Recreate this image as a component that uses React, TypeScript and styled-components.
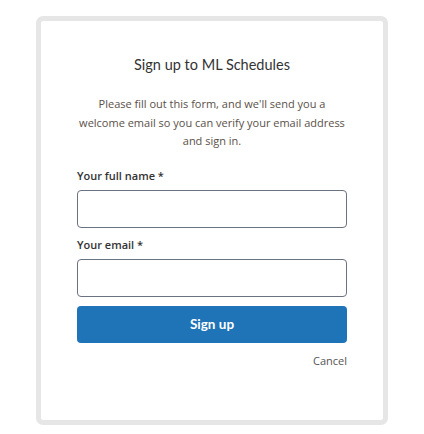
import styled, { createGlobalStyle } from 'styled-components';

const GlobalStyle = createGlobalStyle`
  body {
    margin: 0;
    background: #ffffff;
    font-family: "Open Sans", "Noto Sans", sans-serif;
  }
`;

const Page = styled.div`
  padding: 16px 0 0 36px;
`;

const Card = styled.div`
  box-sizing: border-box;
  width: 352px;
  height: 409px;
  border: 5px solid #e6e6e6;
  border-radius: 7px;
  padding: 34px 36px 0;
  display: flex;
  flex-direction: column;
`;

const Title = styled.h1`
  margin: 0;
  font-family: "Lato", "Noto Sans", sans-serif;
  font-weight: 400;
  font-size: 14.5px;
  line-height: 20px;
  color: #333333;
  text-align: center;
`;

const Intro = styled.p`
  margin: 20px 0 17px;
  font-size: 11px;
  line-height: 18.5px;
  color: #5a5048;
  text-align: center;
`;

const Field = styled.div`
  display: flex;
  flex-direction: column;
  margin-bottom: 9px;
`;

const Label = styled.label`
  font-size: 11px;
  font-weight: 600;
  line-height: 16px;
  color: #333333;
  margin-bottom: 6px;
`;

const Input = styled.input`
  box-sizing: border-box;
  height: 38px;
  width: 100%;
  border: 1px solid #6b7280;
  border-radius: 4px;
  padding: 0 10px;
  font-size: 13px;
  outline: none;
`;

const SubmitButton = styled.button`
  height: 37px;
  width: 100%;
  border: none;
  border-radius: 4px;
  background: #1f73b7;
  color: #ffffff;
  font-family: "Lato", "Noto Sans", sans-serif;
  font-weight: 700;
  font-size: 13.5px;
  cursor: pointer;
`;

const CancelRow = styled.div`
  display: flex;
  justify-content: flex-end;
  margin-top: 10px;
`;

const CancelLink = styled.a`
  font-size: 11px;
  line-height: 16px;
  color: #555555;
  text-decoration: none;
  cursor: pointer;
`;

export default function App() {
  return (
    <Page>
      <GlobalStyle />
      <Card>
        <Title>Sign up to ML Schedules</Title>
        <Intro>
          Please fill out this form, and we'll send you a welcome email so you
          can verify your email address and sign in.
        </Intro>
        <Field>
          <Label htmlFor="fullname">Your full name *</Label>
          <Input id="fullname" type="text" />
        </Field>
        <Field>
          <Label htmlFor="email">Your email *</Label>
          <Input id="email" type="email" />
        </Field>
        <SubmitButton type="button">Sign up</SubmitButton>
        <CancelRow>
          <CancelLink>Cancel</CancelLink>
        </CancelRow>
      </Card>
    </Page>
  );
}
